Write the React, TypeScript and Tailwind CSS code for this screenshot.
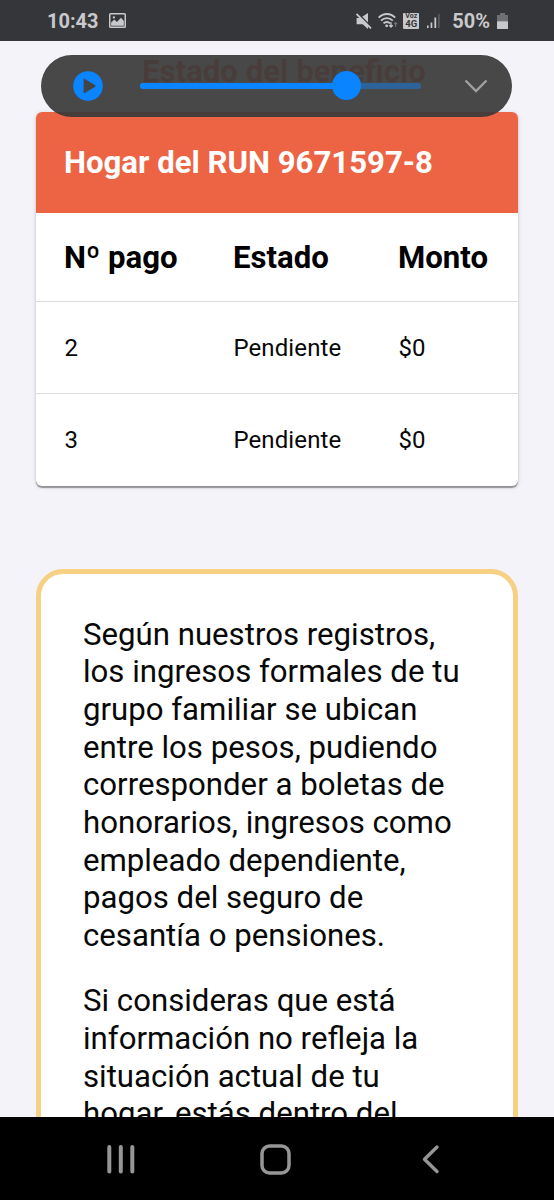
import React, { useState } from 'react';

const payments = [
  { id: 2, status: "Pendiente", amount: "$0" },
  { id: 3, status: "Pendiente", amount: "$0" },
];

const StatusBar = () => (
  <header className="h-[41px] bg-[#35363a] flex items-center justify-between pl-[47px] pr-[46px] text-[#c9c9cb]">
    <div className="flex items-center gap-[10px]">
      <span className="text-[20px] font-bold leading-none">10:43</span>
      <svg width="17" height="15" viewBox="0 0 16 15" preserveAspectRatio="none" fill="none">
        <rect x="0.7" y="0.7" width="14.6" height="13.6" rx="0.8" stroke="currentColor" strokeWidth="1.4" />
        <path d="M2 12.8V9.5l3-3 2.5 2.6 3.8-4.3L14 8v4.8z" fill="currentColor" />
        <circle cx="4.6" cy="4.4" r="1.1" fill="currentColor" />
      </svg>
    </div>
    <div className="flex items-center">
      <svg className="mr-[6px]" width="16" height="16" viewBox="0 0 16 16">
        <path d="M0.6 5h3.6L12 0v16l-5.3-4.8H0.6z" fill="currentColor" />
        <path d="M1.6 0 16 14.6" stroke="#35363a" strokeWidth="1.6" />
        <path d="M0.5 1 15 15.4" stroke="currentColor" strokeWidth="1.8" />
      </svg>
      <svg className="mr-[5px]" width="20" height="16" viewBox="0 0 20 16" fill="none" stroke="currentColor" strokeWidth="1.8">
        <path d="M0.6 4.6C5.4-.2 12.4-.2 17.2 4.6" />
        <path d="M3 7.6c3.5-3.3 8.3-3.3 11.8 0" />
        <path d="M5.5 10.4c2-1.9 4.8-1.9 6.6 0" />
        <circle cx="8.7" cy="12.8" r="1.4" fill="currentColor" stroke="none" />
        <path d="M13 9.2v4.6M11.3 12.2l1.7 1.9 1.7-1.9" strokeWidth="1.3" />
        <path d="M17.6 13.8V9.6M16.2 11.2l1.4-1.7 1.4 1.7" strokeWidth="1.1" opacity="0.45" />
      </svg>
      <div className="mr-[8px] h-[16px] w-[16px] rounded-[1px] bg-[#c9c9cb] text-[#35363a] font-bold text-center flex flex-col justify-center">
        <span className="text-[7px] leading-[7px]">Voz</span>
        <span className="text-[9.5px] leading-[8.5px]">4G</span>
      </div>
      <svg className="mr-[12px]" width="13" height="14" viewBox="0 0 13 14" fill="currentColor">
        <rect x="0" y="11.5" width="1.6" height="2.5" />
        <rect x="3.6" y="8.5" width="1.7" height="5.5" />
        <rect x="7.4" y="3.5" width="1.8" height="10.5" />
        <rect x="11.2" y="0" width="1.4" height="14" opacity="0.3" />
      </svg>
      <span className="text-[20px] font-bold leading-none mr-[7px]">50%</span>
      <svg width="11" height="16" viewBox="0 0 11 16" fill="currentColor">
        <path d="M3 0h5v2h3v6.5H0V2h3z" opacity="0.4" />
        <rect x="0" y="8.3" width="11" height="7.7" rx="0.6" />
      </svg>
    </div>
  </header>
);

const AudioPlayer = () => {
  const [progress] = useState(73.5);

  return (
    <div className="absolute left-[41px] top-[54.5px] w-[471px] h-[62px] rounded-full bg-[#393939]/92 border border-[#3a3a3a]/30 flex items-center pl-[31px] pr-[23px]">
      <button aria-label="Reproducir">
        <svg width="30" height="30" viewBox="0 0 30 30">
          <circle cx="15" cy="15" r="14.8" fill="#0a84ff" />
          <path d="M10.6 8.6v12.8c0 .7.6 1 1.2.7l10.3-6.4c.6-.4.6-1 0-1.4L11.8 7.9c-.6-.3-1.2 0-1.2.7z" fill="#444444" />
        </svg>
      </button>
      <div className="relative ml-[37px] w-[281px] h-[6px] rounded-full bg-[#0a84ff]/45">
        <div className="h-full rounded-full bg-[#0a84ff]" style={{ width: `${progress}%` }} />
        <div className="absolute -top-[12px] -ml-[14.5px] size-[29px] rounded-full bg-[#0a84ff]" style={{ left: `${progress}%` }} />
      </div>
      <button aria-label="Minimizar" className="ml-auto">
        <svg width="24" height="14" viewBox="0 0 24 14" fill="none">
          <path d="M1.5 1.5 12 12 22.5 1.5" stroke="#a0a0a0" strokeWidth="2.4" />
        </svg>
      </button>
    </div>
  );
};

const PaymentTable = () => (
  <section className="w-[481.5px] h-[374px] bg-white rounded-[6px] overflow-hidden shadow-[0_1.5px_1px_rgba(0,0,0,0.35),0_1px_5px_rgba(0,0,0,0.14)]">
    <h2 className="h-[101px] bg-[#ec6444] text-white font-bold text-[31.15px] leading-[101px] pl-[28px]">
      Hogar del RUN 9671597-8
    </h2>
    <div className="h-[89px] grid grid-cols-[169px_165px_1fr] items-center pl-[28px] pt-[2px] border-b border-[#dcdcde] text-[31.15px] font-bold text-black">
      <span>Nº pago</span>
      <span>Estado</span>
      <span>Monto</span>
    </div>
    {payments.map((p) => (
      <div key={p.id} className="h-[91.5px] grid grid-cols-[169px_165px_1fr] items-center pl-[28.4px] pt-px border-b border-[#dcdcde] last:border-b-0 text-[24px] tracking-[0.12px]">
        <span>{p.id}</span>
        <span>{p.status}</span>
        <span>{p.amount}</span>
      </div>
    ))}
  </section>
);

const InfoBox = () => (
  <section className="mt-[83px] w-[481.5px] h-[700px] bg-white border-[5px] border-[#f6d083] rounded-[27px] pl-[42px] pt-[41.6px] text-[31.18px] leading-[37.65px]">
    <p className="mb-[27.7px] whitespace-nowrap">
      Según nuestros registros,<br />
      los ingresos formales de tu<br />
      grupo familiar se ubican<br />
      entre los pesos, pudiendo<br />
      corresponder a boletas de<br />
      honorarios, ingresos como<br />
      empleado dependiente,<br />
      pagos del seguro de<br />
      cesantía o pensiones.
    </p>
    <p className="whitespace-nowrap">
      Si consideras que está<br />
      información no refleja la<br />
      situación actual de tu<br />
      hogar, estás dentro del
    </p>
  </section>
);

const NavBar = () => (
  <nav className="h-[83px] bg-black text-[#969696]">
    <svg width="554" height="83" viewBox="0 0 554 83" fill="none" stroke="currentColor" strokeLinecap="round">
      <path d="M109.3 30v24.5M120.8 30v24.5M132.3 30v24.5" strokeWidth="4" />
      <rect x="262" y="29" width="27" height="27" rx="7.5" strokeWidth="3.5" />
      <path d="M437 30 424.5 42.2 437 54.5" strokeWidth="3.4" strokeLinejoin="round" />
    </svg>
  </nav>
);

const App = () => {
  return (
    <div className="relative w-[554px] h-[1200px] overflow-hidden flex flex-col bg-[#f4f3fa] text-[#080808] font-['Roboto',sans-serif]">
      <StatusBar />
      <main className="h-[1076px] overflow-hidden pl-[36px]">
        <h1 className="h-[71px] pt-[12px] pl-[106px] text-[31.2px] leading-[37px] font-bold text-[#ec6444]">
          Estado del beneficio
        </h1>
        <PaymentTable />
        <InfoBox />
      </main>
      <NavBar />
      <AudioPlayer />
    </div>
  );
};

export default App;
